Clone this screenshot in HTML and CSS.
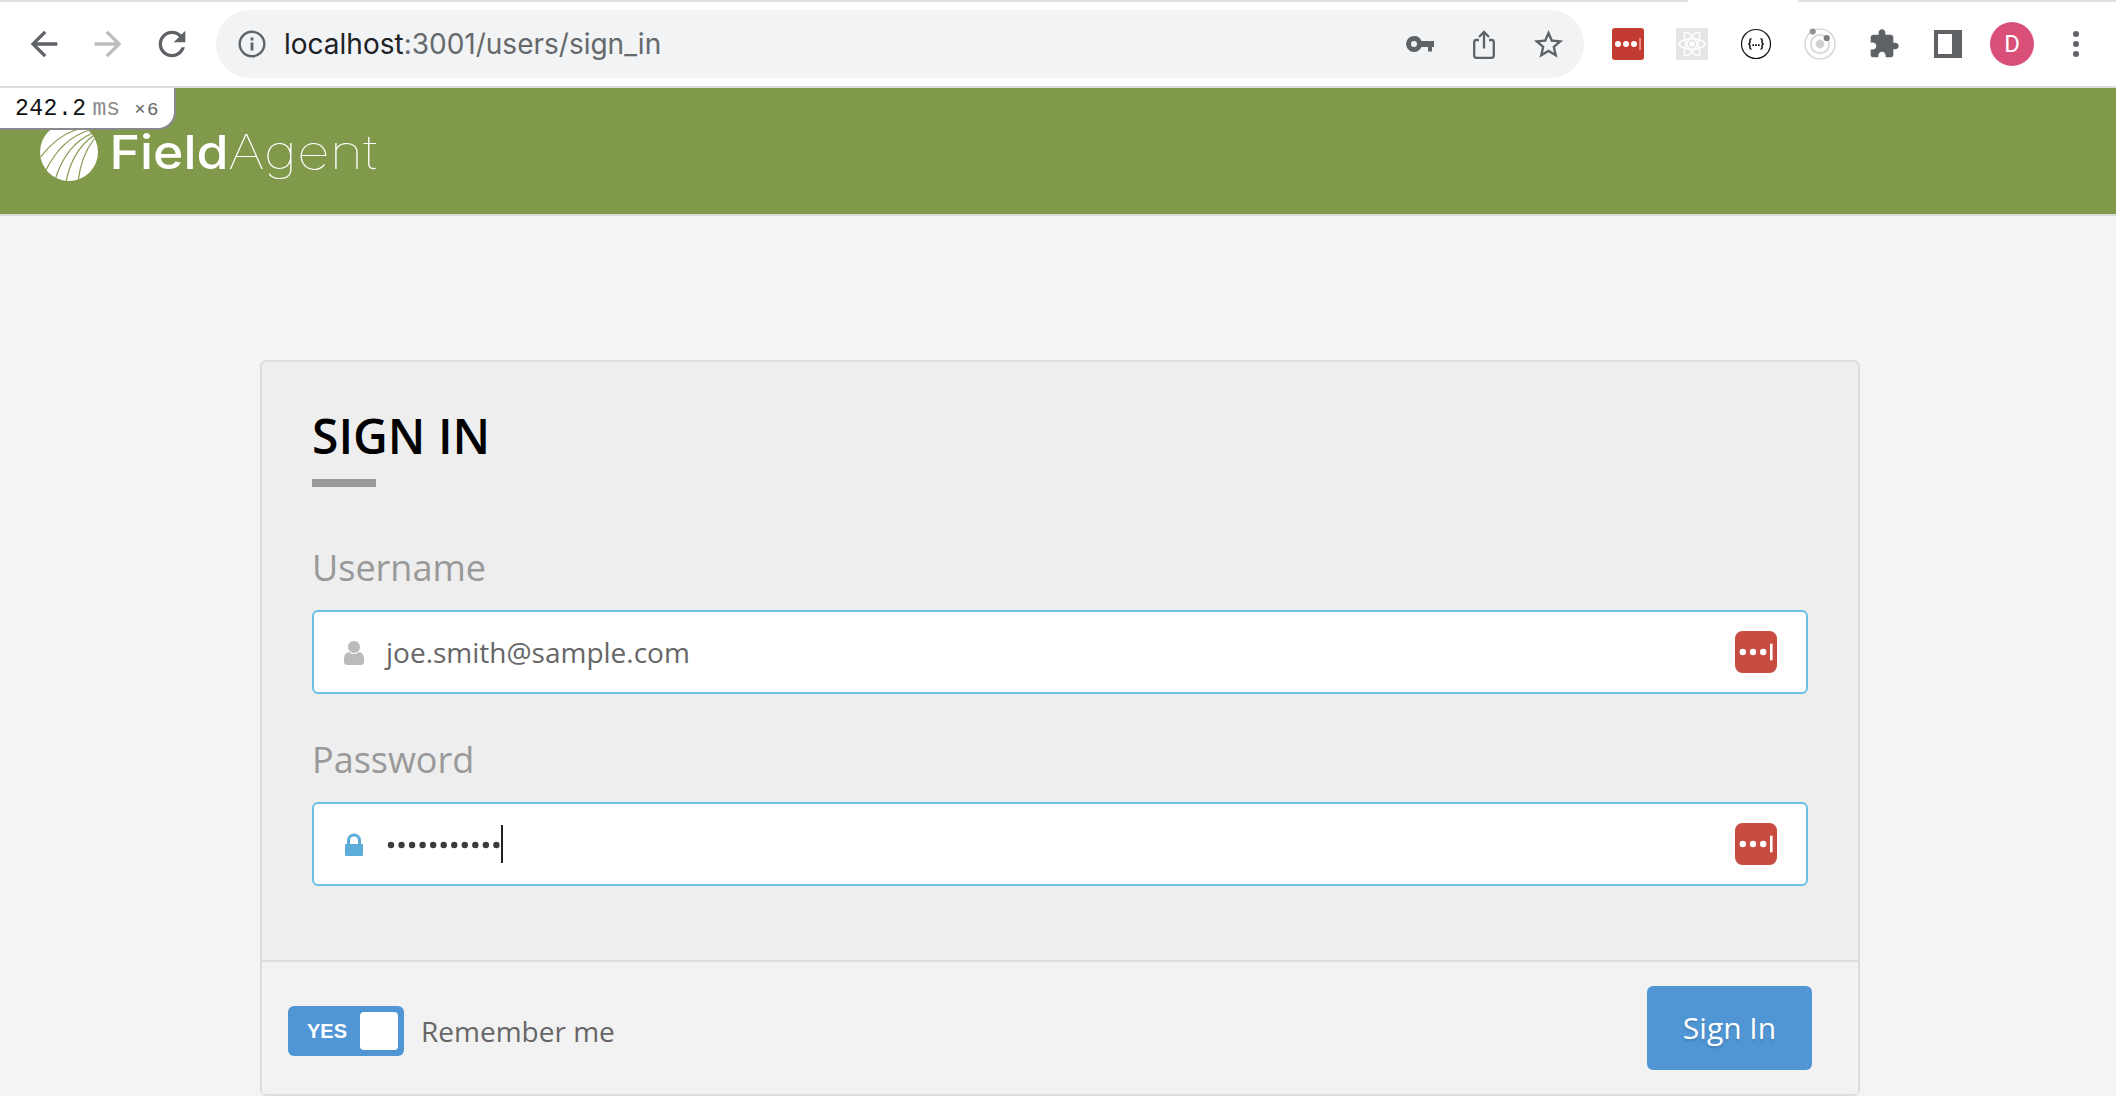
FILE: index.html
```html
<!DOCTYPE html>
<html lang="en">
<head>
<meta charset="utf-8">
<title>FieldAgent - Sign In</title>
<link rel="stylesheet" href="styles.css">
</head>
<body>
<div class="toolbar">
  <div class="active-tab"></div>
  <div class="cell"><svg class="i40" viewBox="0 0 24 24"><path fill="#5f6368" d="M20 11H7.83l5.59-5.59L12 4l-8 8 8 8 1.41-1.41L7.83 13H20v-2z"/></svg></div>
  <div class="cell"><svg class="i40" viewBox="0 0 24 24"><path fill="#babcbe" d="M12 4l-1.41 1.41L16.17 11H4v2h12.17l-5.58 5.59L12 20l8-8z"/></svg></div>
  <div class="cell"><svg class="i40" viewBox="0 0 24 24"><path fill="#5f6368" d="M17.65 6.35C16.2 4.9 14.21 4 12 4c-4.42 0-7.99 3.58-7.99 8s3.57 8 7.99 8c3.73 0 6.84-2.55 7.73-6h-2.08c-.82 2.33-3.04 4-5.65 4-3.31 0-6-2.69-6-6s2.69-6 6-6c1.66 0 3.14.69 4.22 1.78L13 11h7V4l-2.35 2.35z"/></svg></div>
  <div class="address">
    <svg class="info" viewBox="0 0 28 28"><circle cx="14" cy="14" r="12.300" fill="none" stroke="#5f6368" stroke-width="2.400"/><path fill="#5f6368" d="M12.600 7.600h2.800v2.800h-2.800zM12.600 12.400h2.800v8h-2.800z"/></svg>
    <div class="url"><span class="host">localhost</span>:3001/users/sign_in</div>
    <div class="cell"><svg class="key" viewBox="0 0 28 16"><path fill="#5f6368" fill-rule="evenodd" d="M8 0a8 8 0 1 0 7.500 11H22v4.500h4V11h2V5H15.500A8 8 0 0 0 8 0zm0 5a3 3 0 1 1 0 6 3 3 0 0 1 0-6z"/></svg></div>
    <div class="cell"><svg class="i32" viewBox="0 0 32 32"><g fill="none" stroke="#5f6368" stroke-width="2.300"><path d="M11 12H8.500Q6.200 12 6.200 14.300V27.500Q6.200 29.800 8.500 29.800H23.500Q25.800 29.800 25.800 27.500V14.300Q25.800 12 23.500 12H21"/><path d="M16 20.500V4.500M11 9l5-5 5 5"/></g></svg></div>
    <div class="cell"><svg class="i35" viewBox="0 0 24 24"><path fill="#5f6368" d="M22 9.240l-7.190-.62L12 2 9.190 8.630 2 9.240l5.460 4.730L5.820 21 12 17.270 18.180 21l-1.630-7.030L22 9.240zM12 15.400l-3.760 2.270 1-4.280-3.320-2.880 4.380-.38L12 6.100l1.710 4.040 4.380.38-3.320 2.880 1 4.280L12 15.400z"/></svg></div>
  </div>
  <div class="cell"><svg class="i32" viewBox="0 0 32 32"><rect width="32" height="32" rx="3" fill="#c33a31"/><g fill="#fff"><circle cx="6" cy="16" r="3"/><circle cx="14" cy="16" r="3"/><circle cx="22" cy="16" r="3"/><path fill="#eba9a4" d="M27.300 10h1.500v12h-1.500z"/></g></svg></div>
  <div class="cell"><svg class="i32" viewBox="0 0 32 32"><rect width="32" height="32" rx="2" fill="#e5e5e5"/><g fill="none" stroke="#fff" stroke-width="1.500"><ellipse cx="16" cy="16" rx="13" ry="5"/><ellipse cx="16" cy="16" rx="13" ry="5" transform="rotate(60 16 16)"/><ellipse cx="16" cy="16" rx="13" ry="5" transform="rotate(120 16 16)"/></g><circle cx="16" cy="16" r="2.600" fill="#fff"/></svg></div>
  <div class="cell"><svg class="i32" viewBox="0 0 32 32"><circle cx="16" cy="16" r="14.500" fill="#fff" stroke="#111" stroke-width="1.200"/><g fill="none" stroke="#111" stroke-width="1.500"><path d="M11.500 10.800Q9.900 10.800 9.900 12.500V14.400Q9.900 16 8.200 16 9.900 16 9.900 17.600V19.600Q9.900 21.300 11.500 21.300M20.500 10.800Q22.100 10.800 22.100 12.500V14.400Q22.100 16 23.800 16 22.100 16 22.100 17.600V19.600Q22.100 21.300 20.500 21.300"/></g><path fill="#111" d="M12.400 16.300h1.700v1.700h-1.700zM15.200 16.300h1.700v1.700h-1.700zM18 16.300h1.700v1.700h-1.700z"/></svg></div>
  <div class="cell"><svg class="i32" viewBox="0 0 32 32"><g fill="none" stroke="#dadada"><circle cx="16" cy="16" r="15" stroke-width="1.600"/><circle cx="16" cy="16" r="9.200" stroke-width="2"/></g><circle cx="16" cy="16" r="4.400" fill="#d0d0d0"/><circle cx="8.700" cy="3.500" r="3.100" fill="#929292"/><circle cx="22.700" cy="10" r="3.100" fill="#7d7d7d"/></svg></div>
  <div class="cell"><svg class="i32" viewBox="0 0 24 24"><path fill="#5f6368" d="M20.500 11H19V7c0-1.100-.9-2-2-2h-4V3.500C13 2.120 11.880 1 10.500 1S8 2.120 8 3.500V5H4c-1.100 0-1.990.9-1.990 2v3.800H3.500c1.490 0 2.700 1.210 2.700 2.700s-1.210 2.700-2.700 2.700H2V20c0 1.100.9 2 2 2h3.800v-1.500c0-1.490 1.210-2.700 2.700-2.700 1.490 0 2.700 1.210 2.700 2.700V22H17c1.100 0 2-.9 2-2v-4h1.500c1.380 0 2.500-1.120 2.500-2.500S21.880 11 20.500 11z"/></svg></div>
  <div class="cell"><svg class="i32" viewBox="0 0 32 32"><path fill="#5f6368" fill-rule="evenodd" d="M2 2h28v28H2zM6 6v20h14V6z"/></svg></div>
  <div class="cell"><div class="avatar">D</div></div>
  <div class="cell"><svg class="i32" viewBox="0 0 32 32"><g fill="#5f6368"><circle cx="16" cy="6" r="3"/><circle cx="16" cy="16" r="3"/><circle cx="16" cy="26" r="3"/></g></svg></div>
</div>

<header class="site-header">
  <svg class="mark" viewBox="0 0 60 60"><defs><clipPath id="disc"><circle cx="30" cy="30" r="29"/></clipPath></defs><circle cx="30" cy="30" r="29" fill="#fff"/><g clip-path="url(#disc)" fill="none" stroke="#81994b" stroke-width="1.200"><path d="M1 36Q18 13 40 7"/><path d="M7 48Q23 16 51 8"/><path d="M16 58Q27 22 54 11"/><path d="M27 60Q33 29 54 14"/><path d="M39 60Q42 34 55 17"/></g></svg>
  <svg class="wordmark" viewBox="0 0 280 60"><text class="field" x="10.500" y="46.500" textLength="119" lengthAdjust="spacingAndGlyphs">Field</text><text class="agent" x="129" y="46.500" textLength="149" lengthAdjust="spacingAndGlyphs">Agent</text></svg>
  <div class="profiler"><span class="time">242.2</span><span class="unit">ms</span><span class="count">×6</span></div>
</header>

<main class="page">
  <form class="card">
    <div class="card-body">
      <h1 class="title">SIGN IN</h1>
      <div class="title-bar"></div>
      <label class="label">Username</label>
      <div class="field-box">
        <svg class="field-icon" viewBox="0 0 20 24"><path fill="#bbb" d="M5 11Q7 13 10 13T15 11Q20 11.500 20 18V20.500Q20 24 16.500 24H3.500Q0 24 0 20.500V18Q0 11.500 5 11z"/><circle cx="10" cy="6" r="6.500" fill="#bbb" stroke="#fff" stroke-width="1"/></svg>
        <span class="value">joe.smith@sample.com</span>
        <svg class="pass-icon" viewBox="0 0 42 42"><rect width="42" height="42" rx="7.500" fill="#c84c41"/><g fill="#fff"><circle cx="7.800" cy="21" r="3.200"/><circle cx="18" cy="21" r="3.200"/><circle cx="28.200" cy="21" r="3.200"/><rect x="35" y="12.500" width="2.600" height="17" rx="1.200"/></g></svg>
      </div>
      <label class="label">Password</label>
      <div class="field-box">
        <svg class="field-icon" viewBox="0 0 20 24"><path fill="#5bacd8" d="M3 11V7.500a7 7 0 0 1 14 0V11h1Q19 11 19 12V21.500Q19 23 17.500 23H2.500Q1 23 1 21.500V12Q1 11 2 11zM6 11H14V7.500a4 4 0 0 0-8 0z"/></svg>
        <svg class="dots" viewBox="0 0 114 8"><path d="M4 4H112" fill="none" stroke="#3b3b3b" stroke-width="6.400" stroke-linecap="round" stroke-dasharray="0 10.540"/></svg>
        <span class="caret"></span>
        <svg class="pass-icon" viewBox="0 0 42 42"><rect width="42" height="42" rx="7.500" fill="#c84c41"/><g fill="#fff"><circle cx="7.800" cy="21" r="3.200"/><circle cx="18" cy="21" r="3.200"/><circle cx="28.200" cy="21" r="3.200"/><rect x="35" y="12.500" width="2.600" height="17" rx="1.200"/></g></svg>
      </div>
    </div>
    <div class="card-footer">
      <div class="toggle"><span class="yes">YES</span><span class="knob"></span></div>
      <span class="remember">Remember me</span>
      <button class="submit" type="button">Sign In</button>
    </div>
  </form>
</main>
</body>
</html>
```

FILE: styles.css
```css
* { box-sizing: border-box; }
body { margin: 0; background: #f4f4f4; height: 1096px; overflow: hidden; font-family: "Open Sans", sans-serif; }
svg { display: block; flex: none; }

.toolbar { position: relative; display: flex; align-items: center; height: 88px; padding: 0 8px 0 12px; background: #fff; border-top: 2px solid #e0e0e6; border-bottom: 2px solid #dadcdf; }
.active-tab { position: absolute; left: 1688px; top: -2px; width: 110px; height: 2px; background: #fff; }
.cell { width: 64px; flex: none; display: flex; align-items: center; justify-content: center; }
.i40 { width: 40px; height: 40px; }
.i35 { width: 35px; height: 35px; }
.i32 { width: 32px; height: 32px; }
.key { width: 28px; height: 16px; }
.address { flex: 1; display: flex; align-items: center; height: 68px; margin: 0 12px; padding: 0 4px 0 22px; border-radius: 34px; background: #f1f3f4; }
.info { width: 28px; height: 28px; }
.url { flex: 1; margin-left: 18px; font: 28px/36px Inter, sans-serif; letter-spacing: 0; color: #66696c; white-space: nowrap; }
.host { color: #202124; }
.avatar { width: 44px; height: 44px; border-radius: 50%; background: #d94f78; color: #fff; font: 24px/44px Roboto, sans-serif; text-align: center; }

.site-header { position: relative; display: flex; height: 128px; padding: 34px 0 0 39px; background: #81994b; border-bottom: 2px solid #dadadb; }
.mark { width: 60px; height: 60px; }
.wordmark { width: 280px; height: 60px; font: 47px Inter, sans-serif; fill: #fff; }
.field { font-weight: 500; }
.agent { font-weight: 100; }
.profiler { position: absolute; left: 0; top: 0; display: flex; align-items: baseline; width: 176px; height: 42px; padding-left: 15px; background: #fff; border: solid #88888c; border-width: 0 2px 2px 0; border-radius: 0 0 18px 0; font: 23px/42px "Liberation Mono", monospace; white-space: nowrap; }
.time { color: #111; letter-spacing: 0.5px; }
.unit { margin-left: 6px; color: #8c8c8c; }
.count { margin-left: 14px; font-size: 19px; letter-spacing: 1.5px; color: #666; }

.page { padding: 144px 256px 0 260px; }
.card { width: 1600px; height: 736px; border: 2px solid #ddd; border-radius: 6px; background: #eee; }
.card-body { height: 598px; padding: 39px 50px 0; }
.title { margin: 0; font-size: 48px; line-height: 70px; font-weight: 600; color: #000; }
.title-bar { width: 64px; height: 8px; margin-top: 8px; background: #999; }
.label { display: block; height: 50px; margin-top: 56px; font-size: 36px; line-height: 50px; color: #999; }
.field-box { display: flex; align-items: center; height: 84px; margin-top: 17px; padding: 0 29px 0 30px; background: #fff; border: 2px solid #6bbfe4; border-radius: 6px; }
.field-box + .label { margin-top: 41px; }
.field-icon { width: 20px; height: 24px; margin-top: 2px; }
.value { margin-left: 22px; font-size: 28px; line-height: 40px; color: #666; }
.dots { width: 114px; height: 8px; margin-left: 23px; margin-top: 1px; }
.caret { width: 2px; height: 38px; background: #222; }
.pass-icon { width: 42px; height: 42px; margin-left: auto; }
.card-footer { display: flex; align-items: center; height: 134px; padding: 0 46px 0 26px; border-top: 2px solid #ddd; background: #f2f2f2; }
.toggle { display: flex; align-items: center; justify-content: space-between; width: 116px; height: 50px; margin-top: 6px; padding: 0 6px 0 19px; border-radius: 6px; background: #5096d5; }
.yes { font: bold 20px/24px "Liberation Sans", sans-serif; color: #fff; }
.knob { width: 38px; height: 38px; border-radius: 4px; background: #fff; }
.remember { margin: 6px 0 0 17px; font-size: 28px; line-height: 40px; color: #666; }
.submit { width: 165px; height: 84px; margin-left: auto; padding: 0; border: 0; border-radius: 6px; background: #5096d5; color: #fff; font: 30px/84px "Open Sans", sans-serif; text-shadow: 0 2px 2px rgba(0, 0, 0, 0.15); }
```
